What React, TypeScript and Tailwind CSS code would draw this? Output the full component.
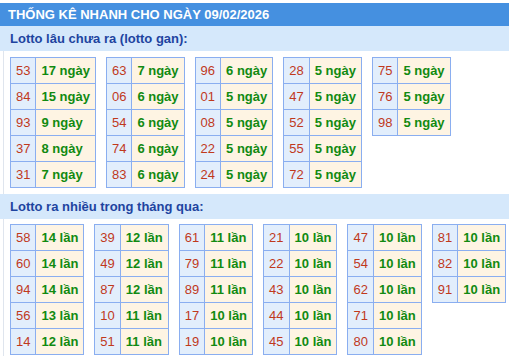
import React from "react";

const gan: [string, string][][] = [
  [["53", "17"], ["84", "15"], ["93", "9"], ["37", "8"], ["31", "7"]],
  [["63", "7"], ["06", "6"], ["54", "6"], ["74", "6"], ["83", "6"]],
  [["96", "6"], ["01", "5"], ["08", "5"], ["22", "5"], ["24", "5"]],
  [["28", "5"], ["47", "5"], ["52", "5"], ["55", "5"], ["72", "5"]],
  [["75", "5"], ["76", "5"], ["98", "5"]],
];

const nhieu: [string, string][][] = [
  [["58", "14"], ["60", "14"], ["94", "14"], ["56", "13"], ["14", "12"]],
  [["39", "12"], ["49", "12"], ["87", "12"], ["10", "11"], ["51", "11"]],
  [["61", "11"], ["79", "11"], ["89", "11"], ["17", "10"], ["19", "10"]],
  [["21", "10"], ["22", "10"], ["43", "10"], ["44", "10"], ["45", "10"]],
  [["47", "10"], ["54", "10"], ["62", "10"], ["71", "10"], ["80", "10"]],
  [["81", "10"], ["82", "10"], ["91", "10"]],
];

function Bang({ rows, unit }: { rows: [string, string][]; unit: string }) {
  return (
    <table className="border-collapse">
      <tbody>
        {rows.map(([so, n]) => (
          <tr key={so}>
            <td className="h-[26px] border border-[#8aaef0] bg-[#e2eefc] px-[5px] text-center text-[#c0391c]">
              {so}
            </td>
            <td className="h-[26px] border border-[#8aaef0] bg-[#fef4e3] px-[5px] font-bold text-[#118a11]">
              {n} {unit}
            </td>
          </tr>
        ))}
      </tbody>
    </table>
  );
}

export default function App() {
  return (
    <div className="w-[509px] bg-white pt-[3px] text-[13px] font-['Liberation_Sans',Arial,sans-serif]">
      {/* tieu de */}
      <div className="flex h-[23px] items-center bg-[#4590e0] pl-[8px] font-bold text-white">
        THỐNG KÊ NHANH CHO NGÀY 09/02/2026
      </div>

      <div className="flex h-[25px] items-center bg-[#d5e8fb] pl-[10px] font-bold text-[#1e44a0]">
        Lotto lâu chưa ra (lotto gan):
      </div>
      <div className="ml-[3px] flex items-start gap-[10px] border-l border-[#dfe5ee] pb-[6px] pl-[6px] pt-[6px]">
        {gan.map((t, i) => (
          <Bang key={i} rows={t} unit="ngày" />
        ))}
      </div>

      <div className="flex h-[25px] items-center bg-[#d5e8fb] pl-[10px] font-bold text-[#1e44a0]">
        Lotto ra nhiều trong tháng qua:
      </div>
      <div className="ml-[3px] flex items-start gap-[10px] border-l border-[#dfe5ee] pb-[6px] pl-[6px] pt-[5px]">
        {nhieu.map((t, i) => (
          <Bang key={i} rows={t} unit="lần" />
        ))}
      </div>
    </div>
  );
}
